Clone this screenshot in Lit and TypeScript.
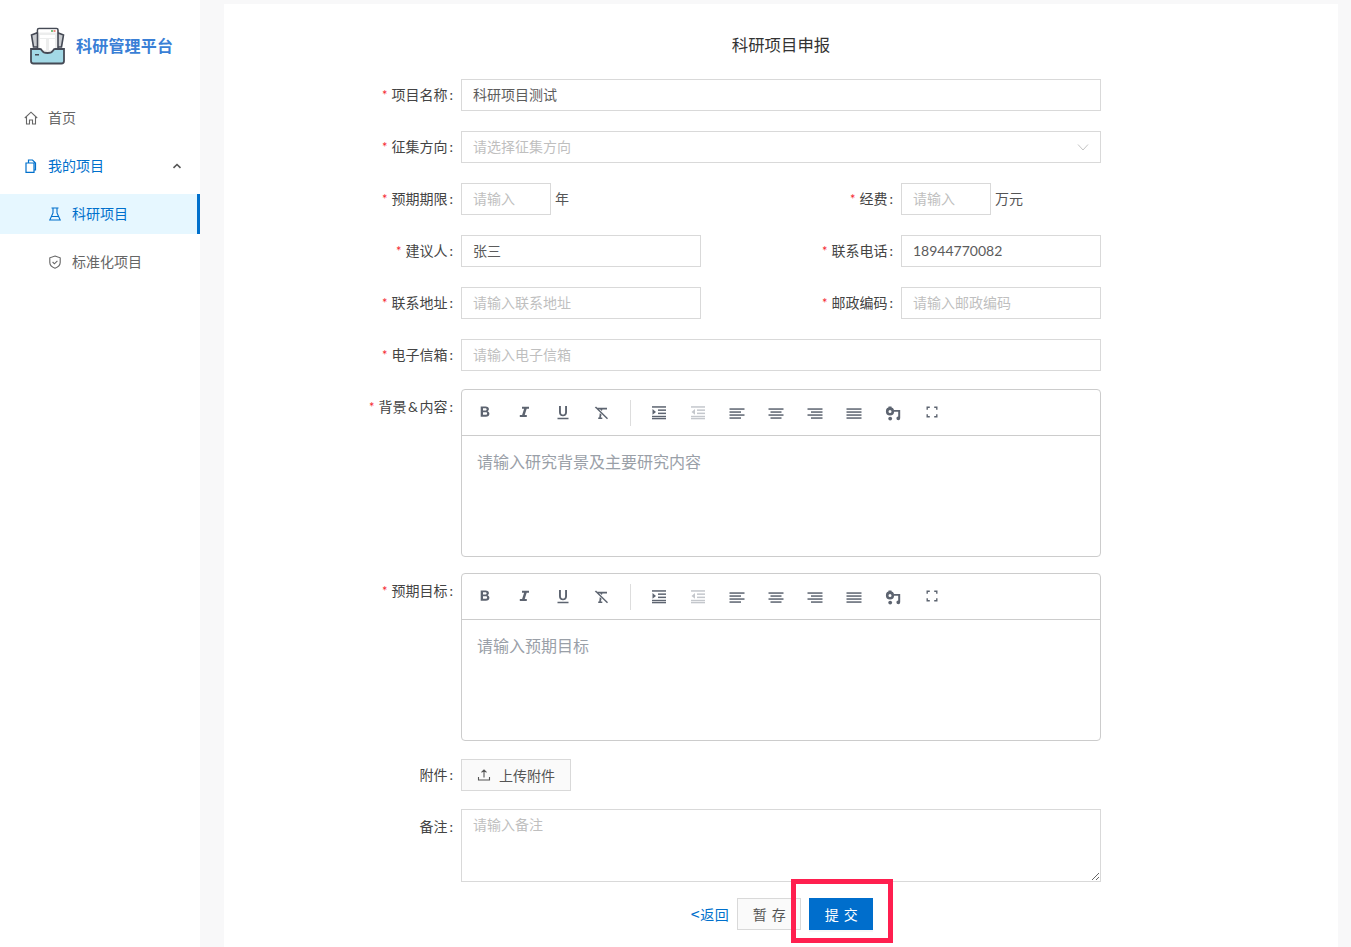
import { LitElement, html, css, svg } from "lit";
import { customElement } from "lit/decorators.js";

const tb = (inner: unknown, off = false) => html`<span class="tool ${off ? "off" : ""}"><svg width="18" height="18" viewBox="0 0 18 18">${inner}</svg></span>`;

const lines = (rows: number[][]) => svg`${rows.map(([a, b, y]) => svg`<rect x=${a} y=${y} width=${b - a} height="1.5"></rect>`)}`;

const toolbar = () => html`<div class="toolbar">
  ${tb(svg`<path d="M4.700 3.500h4.900c2.100 0 3.300 1 3.300 2.600 0 1-.5 1.700-1.300 2.100 1.100.4 1.800 1.300 1.800 2.500 0 1.900-1.400 3-3.500 3H4.700zm2.300 1.800v2.200h2.300c.8 0 1.300-.4 1.300-1.100s-.5-1.100-1.300-1.100zm0 3.900v2.600h2.600c1 0 1.500-.5 1.500-1.300s-.5-1.300-1.500-1.300z"></path>`)}
  ${tb(svg`<path d="M7 3.800h7v1.900h-2.300l-2 6.300h2.100v1.900H4.800V12h2.300l2-6.300H7z"></path>`)}
  ${tb(svg`<path d="M5 3h1.900v6.200c0 1.500.8 2.400 2.100 2.400s2.100-.9 2.100-2.400V3H13v6.300c0 2.500-1.600 4-4 4s-4-1.500-4-4zM3.500 14.800h11v1.500h-11z"></path>`)}
  ${tb(svg`<path d="M1.500 4.800h12.500v1.800H9.400l-.5 1.500-1.700-1.500H7L4 5.700zM2 4.400l1-1 12 11.800-1 1zM6.800 10.100l1.800 1.700-.8 2.600h1.500v1.500H5.200v-1.500h1z"></path>`)}
  <span class="sep"></span>
  ${tb(svg`${lines([[2, 16, 3.200], [8, 16, 6.400], [8, 16, 9.600]])}<rect x="2" y="12.800" width="14" height="1.500"></rect><rect x="2" y="15" width="14" height="1.300"></rect><path d="M2.500 6l3.500 2.900-3.500 2.900z"></path>`)}
  ${tb(svg`${lines([[2, 16, 3.200], [8, 16, 6.400], [8, 16, 9.600]])}<rect x="2" y="12.800" width="14" height="1.500"></rect><rect x="2" y="15" width="14" height="1.300"></rect><path d="M6 6L2.500 8.900 6 11.800z"></path>`, true)}
  ${tb(svg`${lines([[1.500, 16.500, 5.300], [1.500, 13, 8.300], [1.500, 16.500, 11.300], [1.500, 13, 14.300]])}`)}
  ${tb(svg`${lines([[1.500, 16.500, 5.300], [3.500, 14.500, 8.300], [1.500, 16.500, 11.300], [3.500, 14.500, 14.300]])}`)}
  ${tb(svg`${lines([[1.500, 16.500, 5.300], [5, 16.500, 8.300], [1.500, 16.500, 11.300], [5, 16.500, 14.300]])}`)}
  ${tb(svg`${lines([[1.500, 16.500, 5.300], [1.500, 16.500, 8.300], [1.500, 16.500, 11.300], [1.500, 16.500, 14.300]])}`)}
  ${tb(svg`<circle cx="6" cy="8.400" r="2.800" fill="none" stroke="#5d6470" stroke-width="2.600"></circle><rect x="4.500" y="3.500" width="3" height="2"></rect><circle cx="6.200" cy="15.600" r="1.900"></circle><path d="M10 7h6.200v8.300a1.900 1.900 0 1 1-2-1.900V8.800H10z"></path>`)}
  ${tb(svg`<path d="M3.500 3.500h3.300v1.400H4.900v1.900H3.500zM11.200 3.500h3.300v3.300h-1.400V4.900h-1.900zM3.500 11.200h1.400v1.900h1.900v1.400H3.500zM13.100 11.200h1.400v3.300h-3.300v-1.400h1.900z"></path>`)}
</div>`;

const label = (t: unknown, req = true, low = false) => html`<div class="label ${low ? "low" : ""}">${req ? html`<i>*</i>` : ""}${t}<u>:</u></div>`;
const label2 = (t: string) => html`<div class="lab2"><i>*</i>${t}<u>:</u></div>`;

@customElement("app-root")
export class AppRoot extends LitElement {
  static styles = css`
    :host { display: block; height: 947px; overflow: hidden; background: #f8f8f9; font-family: Lato, "Noto Sans CJK SC", sans-serif; font-size: 14px; color: #5c5c5c; }
    * { box-sizing: border-box; }
    .page { display: flex; height: 947px; }
    .side { width: 200px; flex: none; background: #fff; }
    .logo { height: 94px; display: flex; align-items: center; padding: 0 0 2px 28px; gap: 9px; }
    .logo b { font-size: 16px; letter-spacing: .2px; font-weight: 700; color: #3a7fd6; line-height: 20px; white-space: nowrap; }
    .item { height: 48px; display: flex; align-items: center; padding-left: 24px; gap: 10px; color: #666; white-space: nowrap; }
    .item svg { flex: none; }
    .item span { margin-bottom: 2px; }
    .item.open { color: #0070cc; }
    .item .caret { margin-left: auto; margin-right: 18px; }
    .sub { height: 40px; padding-left: 48px; margin: 4px 0 8px; }
    .sub.active { background: #e6f7ff; color: #0070cc; border-right: 3px solid #0070cc; }
    .main { flex: none; width: 1114px; margin: 4px 0 0 24px; background: #fff; height: 943px; }
    h1 { margin: 0; height: 75px; padding-top: 26px; font-size: 16.400px; font-weight: 400; color: #333; line-height: 30px; text-align: center; }
    .row { display: flex; align-items: flex-start; margin-bottom: 20px; }
    .row.s18 { margin-bottom: 18px; }
    .row.s16 { margin-bottom: 16px; }
    .label { width: 237px; flex: none; height: 32px; line-height: 32px; text-align: right; color: #444; white-space: nowrap; }
    .label.low { line-height: 36px; }
    .label i, .lab2 i { font-style: normal; color: #f5222d; margin-right: 4px; font-size: 13px; }
    .label u, .lab2 u { text-decoration: none; margin: 0 8px 0 2px; }
    .amp { margin: 0 1.500px; }
    .ctrl { width: 640px; flex: none; display: flex; align-items: flex-start; }
    .lab2 { flex: 1; height: 32px; line-height: 32px; text-align: right; color: #444; white-space: nowrap; }
    input, textarea { font: inherit; color: #5c5c5c; border: 1px solid #d9d9d9; outline: none; background: #fff; padding: 0 11px 2px; height: 32px; width: 100%; display: block; border-radius: 0; }
    input::placeholder, textarea::placeholder { color: #bfbfbf; opacity: 1; }
    textarea { height: 73px; padding: 4px 11px; line-height: 22px; resize: vertical; }
    .w240 { width: 240px; flex: none; }
    .w200 { width: 200px; flex: none; }
    .w90 { width: 90px; flex: none; }
    .unit { padding-left: 4px; height: 32px; line-height: 32px; color: #555; white-space: nowrap; }
    .half { display: flex; flex: none; }
    .select { height: 32px; border: 1px solid #d9d9d9; width: 100%; display: flex; align-items: center; justify-content: space-between; padding: 0 11px; color: #bfbfbf; }
    .select svg { flex: none; }
    .select span { margin-bottom: 2px; }
    .editor { width: 640px; height: 168px; border: 1px solid #ccc; border-radius: 4px; overflow: hidden; }
    .toolbar { height: 46px; border-bottom: 1px solid #ccc; display: flex; align-items: center; padding: 0 0 2px 3px; }
    .tool { width: 39px; flex: none; height: 18px; display: flex; justify-content: center; align-items: center; }
    .tool svg { fill: #5d6470; display: block; }
    .tool.off svg { fill: #c4c7cc; }
    .sep { width: 1px; height: 26px; background: #ddd; margin: 2px 8.500px 0 9px; flex: none; }
    .body { padding: 14px 15px; font-size: 16px; line-height: 24px; color: #9aa0a8; }
    .upload { width: 110px; height: 32px; border: 1px solid #d9d9d9; background: #fafafa; display: flex; align-items: center; justify-content: center; gap: 8px; color: #555; }
    .upload svg { flex: none; }
    .actions { display: flex; align-items: center; justify-content: center; height: 32px; margin-left: 237px; width: 640px; gap: 8px; padding-left: 2px; }
    .back { color: #0070cc; white-space: nowrap; letter-spacing: .5px; line-height: 32px; }
    .back em { font-style: normal; font-family: "Noto Sans CJK SC", sans-serif; font-size: 16px; }
    .btn { width: 64px; height: 32px; line-height: 32px; text-align: center; border: 1px solid #d9d9d9; background: #fafafa; color: #555; letter-spacing: 5px; padding-left: 5px; }
    .primary { border-color: #006ecc; background: #006ecc; color: #fff; position: relative; box-shadow: 0 2px 0 rgba(0,0,0,.03); }
    .mark { position: absolute; left: -19px; right: -21px; top: -20px; bottom: -14px; border: 5px solid #ff1f4f; pointer-events: none; }
  `;

  render() {
    return html`<div class="page">
      <aside class="side">
        <div class="logo">
          <svg width="39" height="38" viewBox="0 0 39 38">
            <path d="M3.500 8L10 5.500V20H5.500zM35.500 8L29 5.500V20h4.500z" fill="#c9ccd0" stroke="#454a55" stroke-width="1.600"></path>
            <rect x="9.500" y="1.500" width="20.500" height="25" rx="1.500" fill="#eceded" stroke="#454a55" stroke-width="1.600"></rect>
            <rect x="10.500" y="2.500" width="18.500" height="3" fill="#fff"></rect>
            <rect x="23" y="3" width="2" height="2" fill="#7ac27e"></rect><rect x="25.500" y="3" width="2" height="2" fill="#ef8a80"></rect>
            <path d="M12 8h15v3H12zM12 12h6v11h-6zM21 12h6v11h-6z" fill="#fff"></path>
            <path d="M3 22h9c1 0 1.500.6 2 1.600.7 1.400 2.500 2.400 5.500 2.400s4.800-1 5.500-2.400c.5-1 1-1.600 2-1.600h9v12a2.500 2.500 0 0 1-2.500 2.500h-28A2.500 2.500 0 0 1 3 34z" fill="#a3d9e6" stroke="#454a55" stroke-width="1.800"></path>
            <rect x="7" y="27" width="4" height="1.500" fill="#454a55"></rect>
          </svg>
          <b>科研管理平台</b>
        </div>
        <div class="item">
          <svg width="14" height="14" viewBox="0 0 14 14" fill="none" stroke="#666" stroke-width="1.100"><path d="M.8 7L7 1.200 13.200 7M2.500 6v7h3V9h3v4h3V6"></path></svg>
          <span>首页</span>
        </div>
        <div class="item open">
          <svg width="14" height="14" viewBox="0 0 14 14" fill="none" stroke="#0070cc" stroke-width="1.200"><path d="M2 4h8v9.300H2zM4.500 4V1h4l3 3v7H10"></path></svg>
          <span>我的项目</span>
          <svg class="caret" width="10" height="10" viewBox="0 0 10 10" fill="none" stroke="#555" stroke-width="1.600"><path d="M1.500 6.800L5 3.500l3.500 3.300"></path></svg>
        </div>
        <div class="item sub active">
          <svg width="14" height="14" viewBox="0 0 14 14" fill="none" stroke="#0070cc" stroke-width="1.100"><path d="M3.500 1h7M5 1v5L1.800 13h10.400L9 6V1M3.500 9.500h7"></path></svg>
          <span>科研项目</span>
        </div>
        <div class="item sub">
          <svg width="14" height="14" viewBox="0 0 14 14" fill="none" stroke="#666" stroke-width="1.100"><path d="M7 1l5.200 1.800v4.700c0 3-2.400 4.700-5.200 5.700-2.800-1-5.200-2.700-5.200-5.700V2.800z"></path><path d="M4.600 7l1.800 1.800 3-3"></path></svg>
          <span>标准化项目</span>
        </div>
      </aside>
      <main class="main">
        <h1>科研项目申报</h1>
        <div class="row">${label("项目名称")}<div class="ctrl"><input value="科研项目测试" /></div></div>
        <div class="row">${label("征集方向")}<div class="ctrl"><div class="select"><span>请选择征集方向</span><svg width="12" height="12" viewBox="0 0 12 12" fill="none" stroke="#c4c4c4" stroke-width="1"><path d="M1 3.500l5 5.500 5-5.500"></path></svg></div></div></div>
        <div class="row">${label("预期期限")}<div class="ctrl"><div class="half w240"><input class="w90" placeholder="请输入" /><span class="unit">年</span></div>${label2("经费")}<div class="half w200"><input class="w90" placeholder="请输入" /><span class="unit">万元</span></div></div></div>
        <div class="row">${label("建议人")}<div class="ctrl"><input class="w240" value="张三" />${label2("联系电话")}<input class="w200" value="18944770082" /></div></div>
        <div class="row">${label("联系地址")}<div class="ctrl"><input class="w240" placeholder="请输入联系地址" />${label2("邮政编码")}<input class="w200" placeholder="请输入邮政编码" /></div></div>
        <div class="row s18">${label("电子信箱")}<div class="ctrl"><input placeholder="请输入电子信箱" /></div></div>
        <div class="row s16">${label(html`背景<span class="amp">&amp;</span>内容`, true, true)}<div class="editor">${toolbar()}<div class="body">请输入研究背景及主要研究内容</div></div></div>
        <div class="row s18">${label("预期目标", true, true)}<div class="editor">${toolbar()}<div class="body">请输入预期目标</div></div></div>
        <div class="row s18">${label("附件", false)}<div class="ctrl"><div class="upload"><svg width="14" height="14" viewBox="0 0 14 14" fill="none" stroke="#555" stroke-width="1.100"><path d="M7 9.500V2M4.500 4.300L7 2l2.500 2.300M1.500 9v3h11V9"></path></svg><span>上传附件</span></div></div></div>
        <div class="row s16">${label("备注", false, true)}<div class="ctrl"><textarea placeholder="请输入备注"></textarea></div></div>
        <div class="actions">
          <span class="back"><em>&lt;</em>返回</span>
          <div class="btn">暂存</div>
          <div class="btn primary">提交<span class="mark"></span></div>
        </div>
      </main>
    </div>`;
  }
}
